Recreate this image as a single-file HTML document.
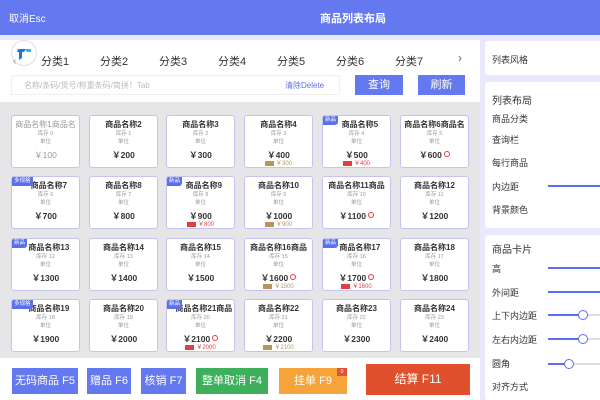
<!DOCTYPE html><html><head><meta charset="utf-8"><style>
*{margin:0;padding:0;box-sizing:border-box}
body{width:600px;height:400px;overflow:hidden;position:relative;background:#e8eafc;font-family:"Liberation Sans","Noto Sans CJK SC",sans-serif;color:#333}
.a{position:absolute}
#hd{left:0;top:0;width:600px;height:35px;background:#6478ef;color:#fff}
#left{left:0;top:40px;width:480px;height:360px;background:#fff}
#grid{left:0;top:102px;width:480px;height:256px;background:#e6e6e8}
.tab{top:53px;font-size:11px;color:#333}
.c{position:absolute;width:69px;height:53px;background:#fff;border:1px solid #c3c5f0;border-radius:3px;text-align:center;overflow:hidden}
.c .n{font-size:8px;font-weight:bold;margin-top:4px;line-height:10px;white-space:nowrap;color:#333}
.c .s{font-size:5.5px;color:#999;line-height:8px}
.c .p{font-size:8.5px;font-weight:bold;line-height:11px;margin-top:4px;color:#333}
.c .o{font-size:6px;line-height:7px;color:#b8955a}
.c .o.r{color:#e04040}
.c .o i{display:inline-block;width:9px;height:5px;background:#b8955a;vertical-align:middle;margin-right:2px}
.c .o.r i{background:#e04040}
.g{color:#999!important;font-weight:normal!important}
.b{position:absolute;left:0;top:0;background:#5b70ec;color:#fff;font-size:5.5px;padding:1px 2px;border-radius:0 0 3px 0;line-height:7px}
.ck{display:inline-block;width:6px;height:6px;border:1px solid #e04040;border-radius:50%;margin-left:2px;vertical-align:1px}
.btn{position:absolute;color:#fff;font-size:11px;text-align:center;line-height:26px;height:26px;top:368px}
.lb{position:absolute;left:492px;font-size:9px;color:#333}
.tr{position:absolute;left:548px;height:2px;background:#5b70ec}
.tg{position:absolute;height:2px;background:#ddd}
.kn{position:absolute;width:10px;height:10px;border:1.5px solid #5b70ec;background:#fff;border-radius:50%}
</style></head><body>
<div id="hd" class="a"><span class="a" style="left:9px;top:10px;font-size:10px">取消Esc</span><span class="a" style="left:320px;top:10px;font-size:11px;font-weight:bold">商品列表布局</span></div>
<div id="left" class="a"></div>
<div class="a" style="left:11px;top:40px;width:26px;height:26px;border-radius:50%;background:#fff;border:1px solid #dde"><svg width="24" height="24" viewBox="0 0 24 24"><path d="M6 8h8l-2 3h-2v6l-3 2v-8H5z" fill="#1a78e0"/><path d="M13 8h6v3h-4z" fill="#2ab7e8"/></svg></div>
<span class="a" style="left:13px;top:56px;font-size:10px;color:#999">‹</span>
<span class="a tab" style="left:41px">分类1</span><span class="a tab" style="left:100px">分类2</span><span class="a tab" style="left:159px">分类3</span><span class="a tab" style="left:218px">分类4</span><span class="a tab" style="left:277px">分类5</span><span class="a tab" style="left:336px">分类6</span><span class="a tab" style="left:395px">分类7</span>
<span class="a" style="left:458px;top:51px;font-size:12px;color:#666">›</span>
<div class="a" style="left:11px;top:75px;width:329px;height:20px;border:1px solid #eee;border-radius:2px"><span class="a" style="left:12px;top:4px;font-size:8px;color:#bbb">名称/条码/货号/称重条码/简拼！Tab</span><span class="a" style="left:273px;top:4px;font-size:8px;color:#5b70ec">清除Delete</span></div>
<div class="a" style="left:355px;top:75px;width:48px;height:20px;background:#6478ef;color:#fff;font-size:11px;text-align:center;line-height:20px">查询</div>
<div class="a" style="left:418px;top:75px;width:47px;height:20px;background:#6478ef;color:#fff;font-size:11px;text-align:center;line-height:20px">刷新</div>
<div id="grid" class="a"></div>

<div class="c" style="left:11px;top:115px"><div class="n g">商品名称1商品名</div><div class="s">库存 0</div><div class="s">单位</div><div class="p g">￥100</div></div>
<div class="c" style="left:89px;top:115px"><div class="n">商品名称2</div><div class="s">库存 1</div><div class="s">单位</div><div class="p">￥200</div></div>
<div class="c" style="left:166px;top:115px"><div class="n">商品名称3</div><div class="s">库存 2</div><div class="s">单位</div><div class="p">￥300</div></div>
<div class="c" style="left:244px;top:115px"><div class="n">商品名称4</div><div class="s">库存 3</div><div class="s">单位</div><div class="p">￥400</div><div class="o"><i></i>￥300</div></div>
<div class="c" style="left:322px;top:115px"><span class="b">新品</span><div class="n">&nbsp;&nbsp;&nbsp;商品名称5</div><div class="s">库存 4</div><div class="s">单位</div><div class="p">￥500</div><div class="o r"><i></i>￥400</div></div>
<div class="c" style="left:400px;top:115px"><div class="n">商品名称6商品名</div><div class="s">库存 5</div><div class="s">单位</div><div class="p">￥600<span class="ck"></span></div></div>

<div class="c" style="left:11px;top:176px"><span class="b">多规格</span><div class="n">&nbsp;&nbsp;&nbsp;商品名称7</div><div class="s">库存 6</div><div class="s">单位</div><div class="p">￥700</div></div>
<div class="c" style="left:89px;top:176px"><div class="n">商品名称8</div><div class="s">库存 7</div><div class="s">单位</div><div class="p">￥800</div></div>
<div class="c" style="left:166px;top:176px"><span class="b">新品</span><div class="n">&nbsp;&nbsp;&nbsp;商品名称9</div><div class="s">库存 8</div><div class="s">单位</div><div class="p">￥900</div><div class="o r"><i></i>￥800</div></div>
<div class="c" style="left:244px;top:176px"><div class="n">商品名称10</div><div class="s">库存 9</div><div class="s">单位</div><div class="p">￥1000</div><div class="o"><i></i>￥900</div></div>
<div class="c" style="left:322px;top:176px"><div class="n">商品名称11商品</div><div class="s">库存 10</div><div class="s">单位</div><div class="p">￥1100<span class="ck"></span></div></div>
<div class="c" style="left:400px;top:176px"><div class="n">商品名称12</div><div class="s">库存 11</div><div class="s">单位</div><div class="p">￥1200</div></div>

<div class="c" style="left:11px;top:238px"><span class="b">新品</span><div class="n">&nbsp;&nbsp;&nbsp;商品名称13</div><div class="s">库存 12</div><div class="s">单位</div><div class="p">￥1300</div></div>
<div class="c" style="left:89px;top:238px"><div class="n">商品名称14</div><div class="s">库存 13</div><div class="s">单位</div><div class="p">￥1400</div></div>
<div class="c" style="left:166px;top:238px"><div class="n">商品名称15</div><div class="s">库存 14</div><div class="s">单位</div><div class="p">￥1500</div></div>
<div class="c" style="left:244px;top:238px"><div class="n">商品名称16商品</div><div class="s">库存 15</div><div class="s">单位</div><div class="p">￥1600<span class="ck"></span></div><div class="o"><i></i>￥1500</div></div>
<div class="c" style="left:322px;top:238px"><span class="b">新品</span><div class="n">&nbsp;&nbsp;&nbsp;商品名称17</div><div class="s">库存 16</div><div class="s">单位</div><div class="p">￥1700<span class="ck"></span></div><div class="o r"><i></i>￥1600</div></div>
<div class="c" style="left:400px;top:238px"><div class="n">商品名称18</div><div class="s">库存 17</div><div class="s">单位</div><div class="p">￥1800</div></div>

<div class="c" style="left:11px;top:299px"><span class="b">多规格</span><div class="n">&nbsp;&nbsp;&nbsp;商品名称19</div><div class="s">库存 18</div><div class="s">单位</div><div class="p">￥1900</div></div>
<div class="c" style="left:89px;top:299px"><div class="n">商品名称20</div><div class="s">库存 19</div><div class="s">单位</div><div class="p">￥2000</div></div>
<div class="c" style="left:166px;top:299px"><span class="b">新品</span><div class="n">&nbsp;&nbsp;&nbsp;商品名称21商品</div><div class="s">库存 20</div><div class="s">单位</div><div class="p">￥2100<span class="ck"></span></div><div class="o r"><i></i>￥2000</div></div>
<div class="c" style="left:244px;top:299px"><div class="n">商品名称22</div><div class="s">库存 21</div><div class="s">单位</div><div class="p">￥2200</div><div class="o"><i></i>￥2100</div></div>
<div class="c" style="left:322px;top:299px"><div class="n">商品名称23</div><div class="s">库存 22</div><div class="s">单位</div><div class="p">￥2300</div></div>
<div class="c" style="left:400px;top:299px"><div class="n">商品名称24</div><div class="s">库存 23</div><div class="s">单位</div><div class="p">￥2400</div></div>

<div class="btn" style="left:12px;width:66px;background:#6478ef">无码商品 F5</div>
<div class="btn" style="left:87px;width:44px;background:#6478ef">赠品 F6</div>
<div class="btn" style="left:141px;width:45px;background:#6478ef">核销 F7</div>
<div class="btn" style="left:196px;width:72px;background:#3eaf5a">整单取消 F4</div>
<div class="btn" style="left:279px;width:68px;background:#f6a43a">挂单 F9<span class="a" style="right:0;top:0;width:10px;height:8px;background:#e0533a;font-size:5px;line-height:8px">0</span></div>
<div class="btn" style="left:366px;top:364px;width:104px;height:31px;line-height:31px;background:#e0502c;font-size:12px">结算 F11</div>

<div class="a" style="left:485px;top:41px;width:115px;height:34px;background:#fff;border-radius:3px 0 0 3px"></div>
<div class="a" style="left:485px;top:82px;width:115px;height:146px;background:#fff;border-radius:3px 0 0 3px"></div>
<div class="a" style="left:485px;top:235px;width:115px;height:165px;background:#fff;border-radius:3px 0 0 3px"></div>
<span class="lb" style="top:53px">列表风格</span>
<span class="lb" style="top:92px;font-size:10px">列表布局</span>
<span class="lb" style="top:112px">商品分类</span>
<span class="lb" style="top:133px">查询栏</span>
<span class="lb" style="top:156px">每行商品</span>
<span class="lb" style="top:180px">内边距</span><div class="tr" style="top:185px;width:52px"></div>
<span class="lb" style="top:203px">背景颜色</span>
<span class="lb" style="top:241px;font-size:10px">商品卡片</span>
<span class="lb" style="top:262px">高</span><div class="tr" style="top:267px;width:52px"></div>
<span class="lb" style="top:286px">外间距</span><div class="tr" style="top:291px;width:52px"></div>
<span class="lb" style="top:309px">上下内边距</span><div class="tr" style="top:314px;width:35px"></div><div class="tg" style="left:583px;top:314px;width:17px"></div><div class="kn" style="left:578px;top:310px"></div>
<span class="lb" style="top:333px">左右内边距</span><div class="tr" style="top:338px;width:35px"></div><div class="tg" style="left:583px;top:338px;width:17px"></div><div class="kn" style="left:578px;top:334px"></div>
<span class="lb" style="top:357px">圆角</span><div class="tr" style="top:363px;width:22px"></div><div class="tg" style="left:570px;top:363px;width:30px"></div><div class="kn" style="left:564px;top:359px"></div>
<span class="lb" style="top:380px">对齐方式</span>
</body></html>
